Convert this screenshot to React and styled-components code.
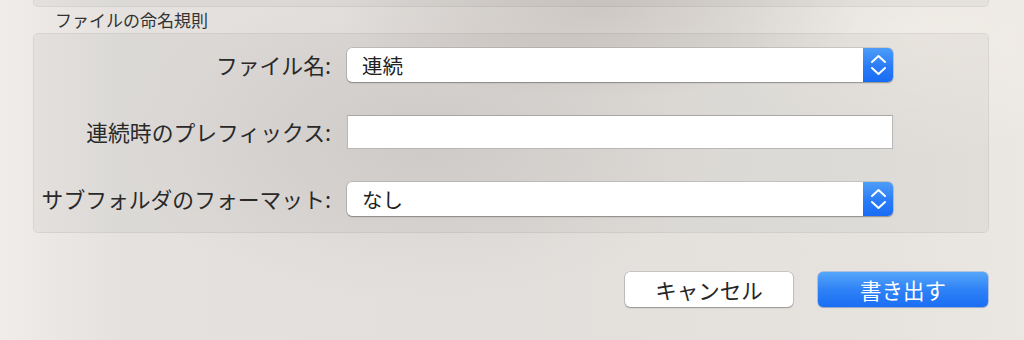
import React from "react";
import styled, { createGlobalStyle } from "styled-components";

const GlobalStyle = createGlobalStyle`
  html, body {
    margin: 0;
    padding: 0;
  }
  body {
    font-family: "Noto Sans CJK JP", "Noto Sans", sans-serif;
    color: #272727;
  }
`;

const Window = styled.div`
  width: 1024px;
  height: 340px;
  box-sizing: border-box;
  padding: 0 35px 0 33px;
  overflow: hidden;
  background:
    radial-gradient(ellipse 260px 90px at 600px 10px, rgba(150, 140, 135, 0.28), transparent),
    radial-gradient(ellipse 200px 120px at 920px 40px, rgba(255, 250, 240, 0.35), transparent),
    radial-gradient(ellipse 300px 160px at 420px 140px, rgba(160, 150, 148, 0.18), transparent),
    linear-gradient(90deg, #efece9 0%, #e4e1de 12%, #e2dfdc 50%, #e6e3df 85%, #ebe7e2 100%);
`;

const PrevGroup = styled.div`
  height: 7px;
  background: rgba(0, 0, 0, 0.035);
  border: 1px solid rgba(0, 0, 0, 0.05);
  border-top: none;
  border-radius: 0 0 5px 5px;
  box-sizing: border-box;
`;

const GroupTitle = styled.div`
  height: 26px;
  line-height: 26px;
  padding-left: 22px;
  font-size: 17px;
  color: #333;
`;

const GroupBox = styled.div`
  box-sizing: border-box;
  height: 200px;
  padding: 14px 0 0;
  background: rgba(0, 0, 0, 0.035);
  border: 1px solid rgba(0, 0, 0, 0.055);
  border-radius: 5px;
  display: grid;
  grid-template-columns: 297px 546px;
  grid-auto-rows: 34px;
  column-gap: 16px;
  row-gap: 33px;
  align-items: center;
`;

const Label = styled.div`
  text-align: right;
  font-size: 21.8px;
  line-height: 34px;
  white-space: nowrap;
  color: #292929;
`;

const Popup = styled.div`
  height: 34px;
  display: flex;
  align-items: stretch;
  background: #fff;
  border-radius: 5px;
  box-shadow: 0 0 0 0.5px rgba(0, 0, 0, 0.22), 0 1px 1.5px rgba(0, 0, 0, 0.28);
`;

const PopupValue = styled.div`
  flex: 1;
  padding-left: 15px;
  font-size: 20.5px;
  line-height: 34px;
  color: #222;
`;

const Stepper = styled.div`
  width: 30px;
  display: flex;
  align-items: center;
  justify-content: center;
  border-radius: 0 5px 5px 0;
  background: linear-gradient(180deg, #4d9df8 0%, #2a7cf6 55%, #186cf4 100%);
`;

const TextField = styled.div`
  height: 34px;
  box-sizing: border-box;
  background: #fff;
  border: 1px solid #b9b7b5;
  border-top-color: #a9a7a5;
`;

const ButtonRow = styled.div`
  display: flex;
  justify-content: flex-end;
  gap: 25px;
  margin-top: 39px;
  padding-right: 1px;
`;

const Button = styled.button`
  width: ${(props) => props.width}px;
  height: 35px;
  padding: 0;
  border: none;
  border-radius: 5px;
  font-family: "Noto Sans CJK JP", "Noto Sans", sans-serif;
  font-size: 21.5px;
  line-height: 35px;
  cursor: pointer;
  color: ${(props) => (props.primary ? "#fff" : "#262626")};
  background: ${(props) =>
    props.primary
      ? "linear-gradient(180deg, #55a6fa 0%, #2f82f6 50%, #1a6ef4 100%)"
      : "#fff"};
  box-shadow: ${(props) =>
    props.primary
      ? "0 0 0 0.5px rgba(20, 90, 220, 0.5), 0 1px 1px rgba(0, 0, 0, 0.15)"
      : "0 0 0 0.5px rgba(0, 0, 0, 0.25), 0 1px 1.5px rgba(0, 0, 0, 0.25)"};
`;

function Chevrons() {
  return (
    <svg width="30" height="34" viewBox="0 0 30 34">
      <polyline
        points="9,14 15.5,8 22,14"
        fill="none"
        stroke="#fff"
        strokeWidth="2"
        strokeLinecap="round"
        strokeLinejoin="round"
      />
      <polyline
        points="9,20 15.5,26 22,20"
        fill="none"
        stroke="#fff"
        strokeWidth="2"
        strokeLinecap="round"
        strokeLinejoin="round"
      />
    </svg>
  );
}

function PopupButton({ value }) {
  return (
    <Popup>
      <PopupValue>{value}</PopupValue>
      <Stepper>
        <Chevrons />
      </Stepper>
    </Popup>
  );
}

export default function App() {
  return (
    <Window>
      <GlobalStyle />
      <PrevGroup />
      <GroupTitle>ファイルの命名規則</GroupTitle>
      <GroupBox>
        <Label>ファイル名:</Label>
        <PopupButton value="連続" />
        <Label>連続時のプレフィックス:</Label>
        <TextField />
        <Label>サブフォルダのフォーマット:</Label>
        <PopupButton value="なし" />
      </GroupBox>
      <ButtonRow>
        <Button width={168}>キャンセル</Button>
        <Button width={170} primary>
          書き出す
        </Button>
      </ButtonRow>
    </Window>
  );
}
